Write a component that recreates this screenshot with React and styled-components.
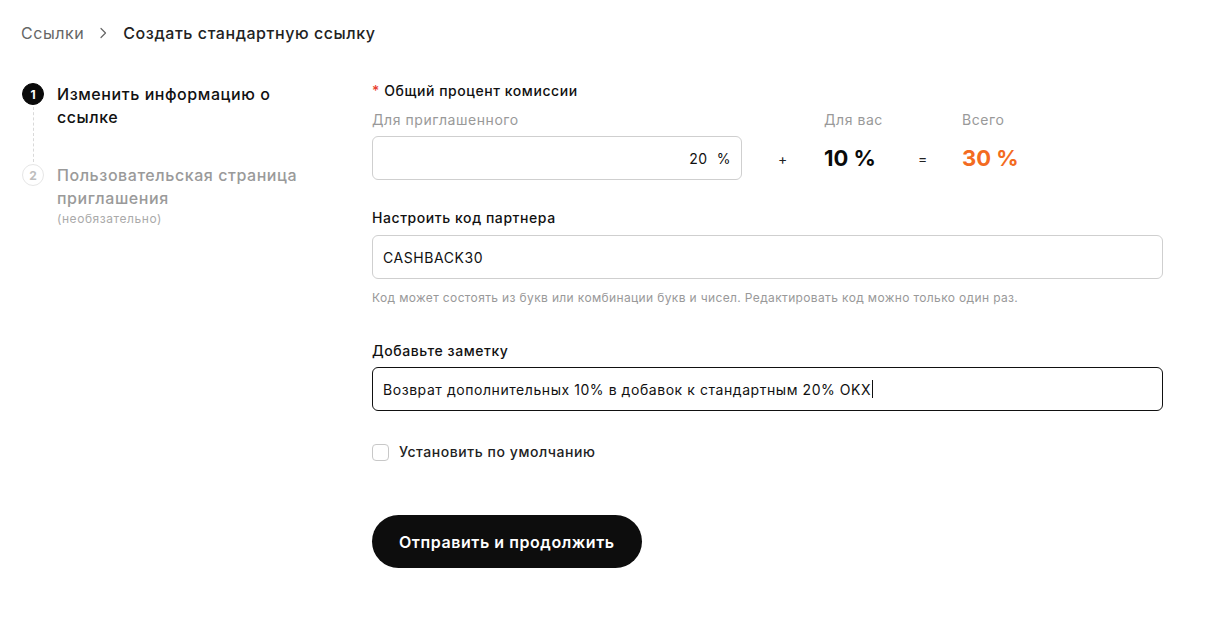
import React from "react";
import styled, { createGlobalStyle } from "styled-components";

const GlobalStyle = createGlobalStyle`
  html, body {
    margin: 0;
    padding: 0;
    background: #fff;
  }
  body {
    font-family: Inter, "Liberation Sans", Arial, sans-serif;
    color: #111;
    letter-spacing: 0.035em;
    -webkit-font-smoothing: antialiased;
  }
`;

function Chevron() {
  return (
    <svg width="10" height="12" viewBox="0 0 10 12" fill="none">
      <path d="M3 1.5L7.5 6L3 10.5" stroke="#666" strokeWidth="1.2" strokeLinecap="round" strokeLinejoin="round" />
    </svg>
  );
}

const steps = [
  { n: 1, title: "Изменить информацию о ссылке", active: true },
  { n: 2, title: "Пользовательская страница приглашения", note: "(необязательно)" },
];

function App() {
  return (
    <Page>
      <GlobalStyle />
      <Crumbs>
        <CrumbLink>Ссылки</CrumbLink>
        <Chevron />
        <CrumbCurrent>Создать стандартную ссылку</CrumbCurrent>
      </Crumbs>

      <Layout>
        <Steps>
          {steps.map((s, i) => (
            <Step key={s.n} last={i === steps.length - 1}>
              <Marker>
                <Dot active={s.active}>{s.n}</Dot>
                {i < steps.length - 1 && <Connector />}
              </Marker>
              <StepText>
                <StepTitle active={s.active}>{s.title}</StepTitle>
                {s.note && <StepNote>{s.note}</StepNote>}
              </StepText>
            </Step>
          ))}
        </Steps>

        <Form>
          <Label>
            <Req>*</Req> Общий процент комиссии
          </Label>
          <CommissionRow>
            <Col width="370px">
              <SubLabel>Для приглашенного</SubLabel>
              <Box align="right">20&nbsp;&nbsp;%</Box>
            </Col>
            <Op width="82px">+</Op>
            <Col width="60px">
              <SubLabel>Для вас</SubLabel>
              <Value>10 %</Value>
            </Col>
            <Op width="78px">=</Op>
            <Col width="80px">
              <SubLabel>Всего</SubLabel>
              <Value accent>30 %</Value>
            </Col>
          </CommissionRow>

          <Label top="28px">Настроить код партнера</Label>
          <Box top="7px">CASHBACK30</Box>
          <Hint>Код может состоять из букв или комбинации букв и чисел. Редактировать код можно только один раз.</Hint>

          <Label top="34px">Добавьте заметку</Label>
          <Box top="6px" focused>
            Возврат дополнительных 10% в добавок к стандартным 20% OKX
            <Caret />
          </Box>

          <CheckRow>
            <CheckBox />
            <span>Установить по умолчанию</span>
          </CheckRow>

          <Submit>Отправить и продолжить</Submit>
        </Form>
      </Layout>
    </Page>
  );
}

const Page = styled.div`
  padding: 22px 21px 40px;
  box-sizing: border-box;
`;

const Crumbs = styled.div`
  display: flex;
  align-items: center;
  gap: 12px;
  height: 22px;
  font-size: 16px;
  svg {
    margin: 0 3px 0 2px;
  }
`;

const CrumbLink = styled.span`
  color: #666;
`;

const CrumbCurrent = styled.span`
  color: #222;
  font-weight: 500;
`;

const Layout = styled.div`
  display: grid;
  grid-template-columns: 351px 791px;
  margin-top: 37px;
`;

const Steps = styled.div`
  display: flex;
  flex-direction: column;
  padding-top: 2px;
`;

const Step = styled.div`
  display: grid;
  grid-template-columns: 24px 1fr;
  column-gap: 12px;
  padding-bottom: ${(p) => (p.last ? "0" : "35px")};
`;

const Marker = styled.div`
  display: flex;
  flex-direction: column;
  align-items: center;
  margin-bottom: -35px;
`;

const Dot = styled.div`
  width: 22px;
  height: 22px;
  box-sizing: border-box;
  border-radius: 50%;
  display: flex;
  align-items: center;
  justify-content: center;
  font-size: 12px;
  font-weight: 700;
  letter-spacing: 0;
  background: ${(p) => (p.active ? "#0a0a0a" : "#fff")};
  color: ${(p) => (p.active ? "#fff" : "#bdbdbd")};
  border: 1px solid ${(p) => (p.active ? "#0a0a0a" : "#e6e6e6")};
`;

const Connector = styled.div`
  flex: 1;
  width: 0;
  margin: 2px 0 2px;
  border-left: 1px dashed #d9d9d9;
`;

const StepText = styled.div`
  display: flex;
  flex-direction: column;
`;

const StepTitle = styled.div`
  font-size: 16px;
  line-height: 23px;
  font-weight: 500;
  width: 250px;
  color: ${(p) => (p.active ? "#111" : "#9a9a9a")};
`;

const StepNote = styled.div`
  font-size: 12px;
  line-height: 18px;
  color: #aaa;
`;

const Form = styled.div`
  display: flex;
  flex-direction: column;
  align-items: flex-start;
`;

const Label = styled.div`
  font-size: 14px;
  line-height: 20px;
  font-weight: 500;
  color: #111;
  margin-top: ${(p) => p.top || "0"};
`;

const Req = styled.span`
  color: #e8402f;
`;

const CommissionRow = styled.div`
  display: flex;
  align-items: flex-end;
  margin-top: 9px;
`;

const Col = styled.div`
  display: flex;
  flex-direction: column;
  width: ${(p) => p.width};
`;

const SubLabel = styled.div`
  font-size: 14px;
  line-height: 20px;
  color: #999;
  margin-bottom: 6px;
  white-space: nowrap;
`;

const Op = styled.div`
  width: ${(p) => p.width};
  height: 44px;
  display: flex;
  align-items: center;
  justify-content: center;
  font-size: 14px;
  color: #222;
`;

const Value = styled.div`
  height: 44px;
  display: flex;
  align-items: center;
  font-size: 22px;
  font-weight: 700;
  letter-spacing: 0;
  white-space: nowrap;
  color: ${(p) => (p.accent ? "#f36b21" : "#0a0a0a")};
`;

const Box = styled.div`
  box-sizing: border-box;
  width: 100%;
  height: 44px;
  margin-top: ${(p) => p.top || "0"};
  padding: 0 10px;
  display: flex;
  align-items: center;
  justify-content: ${(p) => (p.align === "right" ? "flex-end" : "flex-start")};
  border: 1px solid ${(p) => (p.focused ? "#111" : "#cfcfcf")};
  border-radius: 6px;
  font-size: 14px;
  color: #111;
  background: #fff;
  white-space: nowrap;
`;

const Caret = styled.span`
  display: inline-block;
  width: 1px;
  height: 18px;
  background: #111;
  margin-left: 1px;
`;

const Hint = styled.div`
  font-size: 12px;
  line-height: 18px;
  letter-spacing: 0.03em;
  color: #999;
  margin-top: 10px;
`;

const CheckRow = styled.label`
  display: flex;
  align-items: center;
  gap: 10px;
  margin-top: 32px;
  font-size: 14px;
  line-height: 18px;
  color: #222;
  font-weight: 500;
`;

const CheckBox = styled.span`
  width: 17px;
  height: 17px;
  box-sizing: border-box;
  border: 1px solid #c8c8c8;
  border-radius: 4px;
  background: #fff;
`;

const Submit = styled.button`
  margin-top: 54px;
  height: 53px;
  padding: 0 27px;
  border: none;
  border-radius: 27px;
  background: #0d0d0d;
  color: #fff;
  font-family: inherit;
  font-size: 16px;
  font-weight: 600;
  letter-spacing: 0.035em;
  cursor: pointer;
`;

export default App;
